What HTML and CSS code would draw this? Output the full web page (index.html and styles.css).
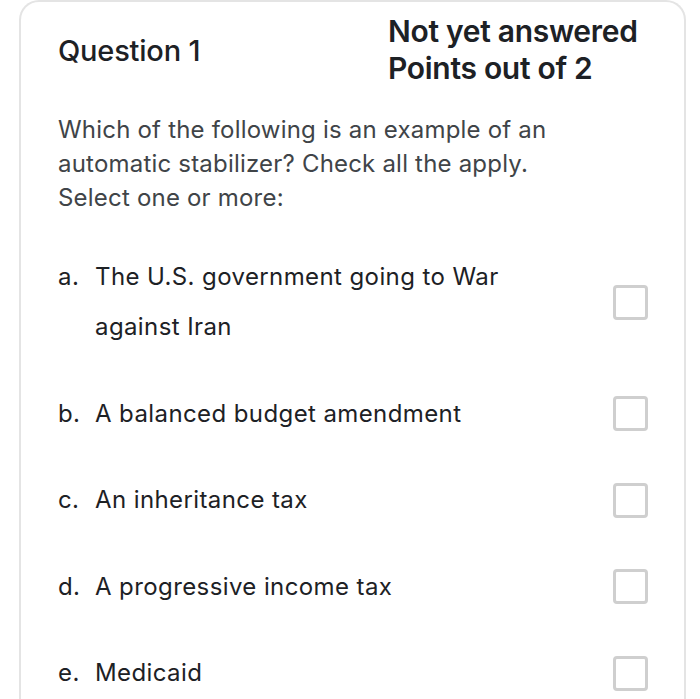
FILE: index.html
```html
<!DOCTYPE html>
<html>
<head>
<meta charset="utf-8">
<link rel="stylesheet" href="styles.css">
</head>
<body>
<div class="card">
  <div class="header">
    <div class="qno">Question 1</div>
    <div class="info">
      <div class="state">Not yet answered</div>
      <div class="grade">Points out of 2</div>
    </div>
  </div>
  <div class="qtext">
    <p class="prompt">Which of the following is an example of an automatic stabilizer? Check all the apply.</p>
    <p class="select">Select one or more:</p>
  </div>
  <div class="answers">
    <div class="opt">
      <span class="letter">a.</span>
      <span class="label">The U.S. government going to War against Iran</span>
      <span class="box"></span>
    </div>
    <div class="opt">
      <span class="letter">b.</span>
      <span class="label">A balanced budget amendment</span>
      <span class="box"></span>
    </div>
    <div class="opt">
      <span class="letter">c.</span>
      <span class="label">An inheritance tax</span>
      <span class="box"></span>
    </div>
    <div class="opt">
      <span class="letter">d.</span>
      <span class="label">A progressive income tax</span>
      <span class="box"></span>
    </div>
    <div class="opt">
      <span class="letter">e.</span>
      <span class="label">Medicaid</span>
      <span class="box"></span>
    </div>
  </div>
</div>
</body>
</html>
```
FILE: styles.css
```css
html, body {
  margin: 0;
  padding: 0;
  background: #ffffff;
  overflow: hidden;
}
body {
  font-family: Inter, "Liberation Sans", sans-serif;
  color: #1d2125;
}
.card {
  margin: 0 14px 0 19px;
  border: 2px solid #e4e4e4;
  border-bottom: none;
  border-radius: 20px 20px 0 0;
  padding: 0 36px 0 37px;
  height: 699px;
  box-sizing: border-box;
  overflow: hidden;
}
.header {
  display: flex;
  align-items: center;
  padding-top: 11px;
}
.qno {
  font-size: 29px;
  font-weight: 500;
  width: 330px;
  padding-top: 0;
  letter-spacing: -0.2px;
}
.info {
  font-size: 30px;
  font-weight: 600;
  line-height: 37px;
  letter-spacing: -0.3px;
}
.qtext {
  margin-top: 26px;
  color: #404448;
  font-size: 24px;
  line-height: 34px;
  letter-spacing: 0.2px;
}
.qtext p {
  margin: 0;
}
.prompt {
  width: 520px;
}
.answers {
  margin-top: 37px;
  display: flex;
  flex-direction: column;
  gap: 36.5px;
}
.opt {
  display: flex;
  align-items: center;
  font-size: 24px;
  line-height: 50px;
  letter-spacing: 0.4px;
}
.letter {
  width: 37px;
  flex: none;
  align-self: flex-start;
}
.label {
  width: 420px;
  flex: none;
}
.box {
  margin-left: auto;
  width: 35px;
  height: 35px;
  box-sizing: border-box;
  border: 3px solid #cfcfcf;
  border-radius: 4px;
  flex: none;
}
```
